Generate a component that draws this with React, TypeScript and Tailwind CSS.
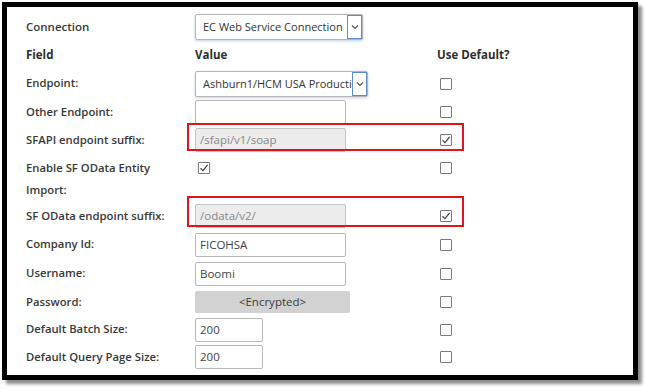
import type { ReactNode } from 'react'

const font = { fontFamily: '"Open Sans", "Noto Sans", sans-serif' }

function Box({ checked = false }: { checked?: boolean }) {
  return (
    <span className="flex h-[12px] w-[12px] items-center justify-center rounded-[1px] border border-[#7a7a7a] bg-white">
      {checked && (
        <svg width="10" height="10" viewBox="0 0 10 10">
          <path d="M1.5 5.2 L4 7.6 L8.6 1.8" fill="none" stroke="#444" strokeWidth="1.3" />
        </svg>
      )}
    </span>
  )
}

function Chevron() {
  return (
    <span className="flex h-full w-[15px] shrink-0 items-center justify-center border border-[#5b8fcf] bg-white">
      <svg width="8" height="6" viewBox="0 0 8 6">
        <path d="M1 1.5 L4 4.5 L7 1.5" fill="none" stroke="#555" strokeWidth="1.2" />
      </svg>
    </span>
  )
}

function Select({ value, width }: { value: string; width: string }) {
  return (
    <div className={`flex h-[26px] ${width} items-stretch rounded-[2px] border border-[#b5b5b5] bg-white shadow-[0_1px_3px_rgba(120,150,190,0.45)]`}>
      <span className="flex-1 overflow-hidden whitespace-nowrap pl-[7px] text-[11px] leading-[24px] text-[#333]">
        {value}
      </span>
      <Chevron />
    </div>
  )
}

function Input({ value = '', disabled = false, width = 'w-[151px]' }: { value?: string; disabled?: boolean; width?: string }) {
  return (
    <div
      className={`h-[24px] ${width} rounded-[2px] border pl-[4px] text-[11.5px] leading-[22px] ${
        disabled ? 'border-[#c4c4c4] bg-[#ececec] text-[#888]' : 'border-[#b8b8b8] bg-white text-[#444]'
      }`}
    >
      {value}
    </div>
  )
}

function Row({
  label,
  h,
  children,
  def = false,
  extra,
}: {
  label: ReactNode
  h: string
  children?: ReactNode
  def?: boolean
  extra?: ReactNode
}) {
  return (
    <div className={`relative flex ${h} items-center pl-[19px]`}>
      <div className="w-[169px] text-[11.3px] font-semibold text-[#383838]">{label}</div>
      <div className="w-[245px]">{children}</div>
      <Box checked={def} />
      {extra}
    </div>
  )
}

function RedBox({ top, height }: { top: string; height: string }) {
  return (
    <div className={`pointer-events-none absolute left-[180px] ${top} ${height} w-[277px] border-2 border-[#e0141b]`} />
  )
}

export default function App() {
  return (
    <div className="h-[391px] w-[645px] bg-white" style={font}>
      <div className="relative left-[2px] top-[2px] h-[378px] w-[636px] border-[5px] border-black bg-white pt-[5px] shadow-[4px_4px_3px_rgba(0,0,0,0.45)]">
        {/* Connection */}
        <div className="flex h-[29px] items-center pl-[19px]">
          <div className="w-[169px] text-[11.5px] font-semibold text-[#383838]">Connection</div>
          <Select value="EC Web Service Connection" width="w-[168px]" />
        </div>

        {/* Header */}
        <div className="flex h-[28px] items-center pl-[19px] text-[11.5px] font-bold text-[#2e2e2e]">
          <div className="w-[169px]">Field</div>
          <div className="w-[242px]">Value</div>
          <div>Use Default?</div>
        </div>

        <Row label="Endpoint:" h="h-[29px]">
          <Select value="Ashburn1/HCM USA Production" width="w-[173px]" />
        </Row>
        <Row label="Other Endpoint:" h="h-[28px]">
          <Input />
        </Row>
        <Row
          label="SFAPI endpoint suffix:"
          h="h-[28px]"
          def
          extra={<RedBox top="-top-[3px]" height="h-[28px]" />}
        >
          <Input value="/sfapi/v1/soap" disabled />
        </Row>

        {/* Enable SF OData */}
        <div className="flex h-[48px] items-start pl-[19px] pt-[3px]">
          <div className="w-[169px] text-[11.3px] font-semibold leading-[22px] text-[#383838]">
            Enable SF OData Entity
            <br />
            Import:
          </div>
          <div className="flex h-[22px] w-[245px] items-center pl-[3px]">
            <Box checked />
          </div>
          <div className="flex h-[22px] items-center">
            <Box />
          </div>
        </div>

        <Row
          label="SF OData endpoint suffix:"
          h="h-[28px]"
          def
          extra={<RedBox top="-top-[6px]" height="h-[31px]" />}
        >
          <Input value="/odata/v2/" disabled />
        </Row>
        <Row label="Company Id:" h="h-[29px]">
          <Input value="FICOHSA" />
        </Row>
        <Row label="Username:" h="h-[29px]">
          <Input value="Boomi" />
        </Row>
        <Row label="Password:" h="h-[28px]">
          <div className="h-[22px] w-[155px] rounded-[2px] bg-[#d2d2d2] text-center text-[11.5px] leading-[22px] text-[#3a3a3a]">
            &lt;Encrypted&gt;
          </div>
        </Row>
        <Row label="Default Batch Size:" h="h-[27px]">
          <Input value="200" width="w-[68px]" />
        </Row>
        <Row label="Default Query Page Size:" h="h-[28px]">
          <Input value="200" width="w-[68px]" />
        </Row>
      </div>
    </div>
  )
}
